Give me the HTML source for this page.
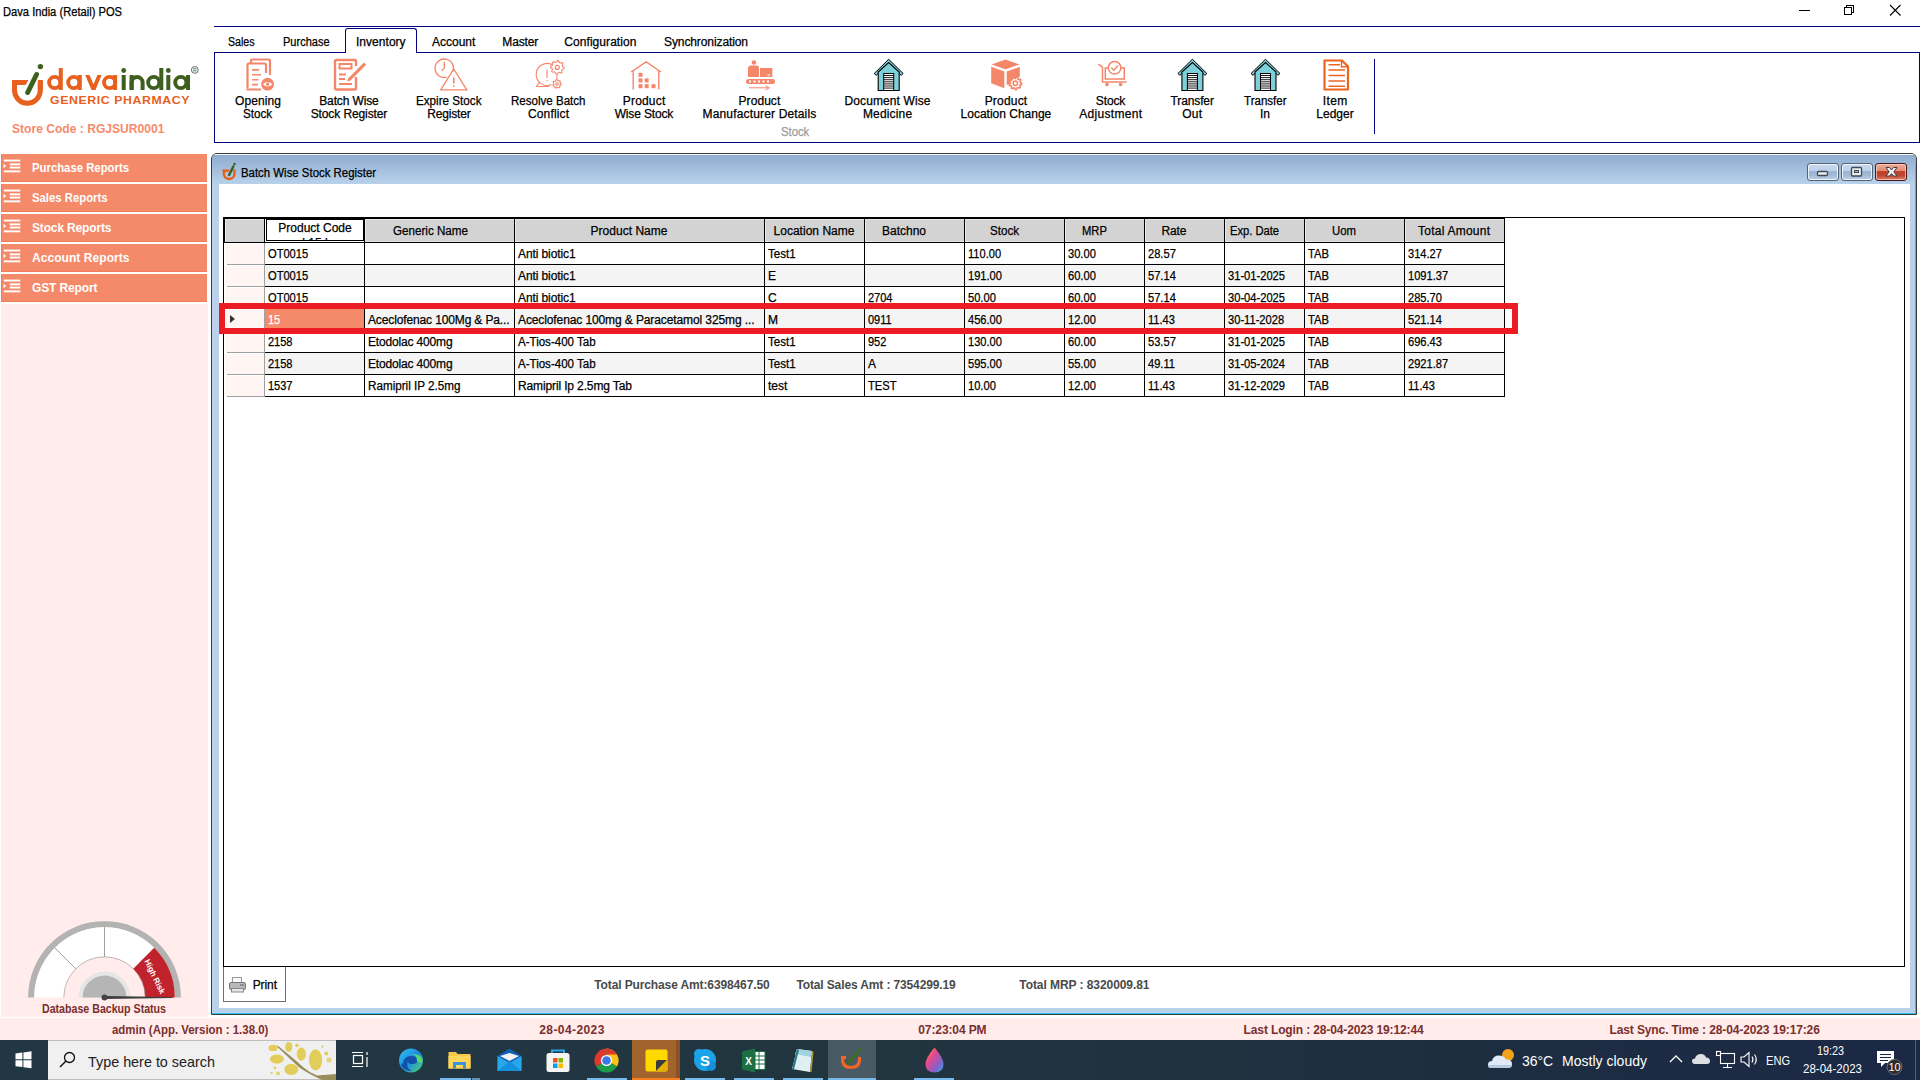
<!DOCTYPE html>
<html><head><meta charset="utf-8"><style>
html,body{margin:0;padding:0;}
body{width:1920px;height:1080px;position:relative;overflow:hidden;background:#fff;font-family:"Liberation Sans",sans-serif;}
div{box-sizing:border-box;}
.t{position:absolute;white-space:nowrap;line-height:20px;-webkit-text-stroke:0.25px currentColor;}
svg{position:absolute;overflow:visible;}
</style></head><body>
<div class="t" style="left:3.00px;top:2px;font-size:12px;font-weight:400;color:#000;letter-spacing:0.000px;transform:scaleX(0.9295);transform-origin:0 0;">Dava India (Retail) POS</div>
<svg style="left:0;top:0" width="1920" height="24"><g stroke="#000" stroke-width="1" fill="none" shape-rendering="crispEdges"><line x1="1799" y1="10.5" x2="1810" y2="10.5"/><rect x="1844.5" y="7.5" width="7" height="7"/><polyline points="1846.5,7.5 1846.5,5.5 1853.5,5.5 1853.5,12.5 1851.5,12.5"/></g><g stroke="#000" stroke-width="1.1" fill="none"><line x1="1890" y1="5" x2="1900.5" y2="15.5"/><line x1="1900.5" y1="5" x2="1890" y2="15.5"/></g></svg>
<div style="position:absolute;left:214px;top:26px;width:1706px;height:1px;background:#000080"></div>
<div class="t" style="left:228.00px;top:32px;font-size:12px;font-weight:400;color:#000;letter-spacing:0.000px;transform:scaleX(0.8862);transform-origin:0 0;">Sales</div>
<div class="t" style="left:282.50px;top:32px;font-size:12px;font-weight:400;color:#000;letter-spacing:0.000px;transform:scaleX(0.9174);transform-origin:0 0;">Purchase</div>
<div class="t" style="left:356.00px;top:32px;font-size:12px;font-weight:400;color:#000;letter-spacing:0.032px;">Inventory</div>
<div class="t" style="left:432.00px;top:32px;font-size:12px;font-weight:400;color:#000;letter-spacing:-0.007px;">Account</div>
<div class="t" style="left:502.30px;top:32px;font-size:12px;font-weight:400;color:#000;letter-spacing:-0.134px;">Master</div>
<div class="t" style="left:564.30px;top:32px;font-size:12px;font-weight:400;color:#000;letter-spacing:0.060px;">Configuration</div>
<div class="t" style="left:664.00px;top:32px;font-size:12px;font-weight:400;color:#000;letter-spacing:-0.098px;">Synchronization</div>
<div style="position:absolute;left:214px;top:52px;width:1706px;height:91px;border:1px solid #000080;background:transparent"></div>
<div style="position:absolute;left:345px;top:28px;width:72px;height:25px;border:1px solid #000080;border-bottom:none;border-radius:3px 3px 0 0;background:transparent"></div>
<div style="position:absolute;left:346px;top:52px;width:70px;height:1px;background:#fff"></div>
<div style="position:absolute;left:1374px;top:59px;width:1px;height:75px;background:#000080"></div>
<div class="t" style="left:235.00px;top:91px;font-size:12px;font-weight:400;color:#000;letter-spacing:0.107px;">Opening</div>
<div class="t" style="left:243.40px;top:104px;font-size:12px;font-weight:400;color:#000;letter-spacing:0.000px;transform:scaleX(0.9733);transform-origin:0 0;">Stock</div>
<div class="t" style="left:319.25px;top:91px;font-size:12px;font-weight:400;color:#000;letter-spacing:-0.130px;">Batch Wise</div>
<div class="t" style="left:310.65px;top:104px;font-size:12px;font-weight:400;color:#000;letter-spacing:-0.101px;">Stock Register</div>
<div class="t" style="left:416.25px;top:91px;font-size:12px;font-weight:400;color:#000;letter-spacing:0.000px;transform:scaleX(0.9726);transform-origin:0 0;">Expire Stock</div>
<div class="t" style="left:427.15px;top:104px;font-size:12px;font-weight:400;color:#000;letter-spacing:-0.141px;">Register</div>
<div class="t" style="left:511.25px;top:91px;font-size:12px;font-weight:400;color:#000;letter-spacing:0.000px;transform:scaleX(0.9630);transform-origin:0 0;">Resolve Batch</div>
<div class="t" style="left:527.90px;top:104px;font-size:12px;font-weight:400;color:#000;letter-spacing:0.169px;">Conflict</div>
<div class="t" style="left:622.75px;top:91px;font-size:12px;font-weight:400;color:#000;letter-spacing:0.193px;">Product</div>
<div class="t" style="left:614.65px;top:104px;font-size:12px;font-weight:400;color:#000;letter-spacing:-0.144px;">Wise Stock</div>
<div class="t" style="left:738.55px;top:91px;font-size:12px;font-weight:400;color:#000;letter-spacing:0.059px;">Product</div>
<div class="t" style="left:702.55px;top:104px;font-size:12px;font-weight:400;color:#000;letter-spacing:0.158px;">Manufacturer Details</div>
<div class="t" style="left:844.50px;top:91px;font-size:12px;font-weight:400;color:#000;letter-spacing:0.109px;">Document Wise</div>
<div class="t" style="left:862.90px;top:104px;font-size:12px;font-weight:400;color:#000;letter-spacing:0.167px;">Medicine</div>
<div class="t" style="left:984.65px;top:91px;font-size:12px;font-weight:400;color:#000;letter-spacing:0.193px;">Product</div>
<div class="t" style="left:960.55px;top:104px;font-size:12px;font-weight:400;color:#000;letter-spacing:-0.001px;">Location Change</div>
<div class="t" style="left:1095.85px;top:91px;font-size:12px;font-weight:400;color:#000;letter-spacing:-0.125px;">Stock</div>
<div class="t" style="left:1079.25px;top:104px;font-size:12px;font-weight:400;color:#000;letter-spacing:0.298px;">Adjustment</div>
<div class="t" style="left:1170.50px;top:91px;font-size:12px;font-weight:400;color:#000;letter-spacing:-0.119px;">Transfer</div>
<div class="t" style="left:1182.20px;top:104px;font-size:12px;font-weight:400;color:#000;letter-spacing:0.336px;">Out</div>
<div class="t" style="left:1243.70px;top:91px;font-size:12px;font-weight:400;color:#000;letter-spacing:0.000px;transform:scaleX(0.9631);transform-origin:0 0;">Transfer</div>
<div class="t" style="left:1260.10px;top:104px;font-size:12px;font-weight:400;color:#000;letter-spacing:-0.200px;">In</div>
<div class="t" style="left:1322.80px;top:91px;font-size:12px;font-weight:400;color:#000;letter-spacing:0.357px;">Item</div>
<div class="t" style="left:1316.30px;top:104px;font-size:12px;font-weight:400;color:#000;letter-spacing:0.008px;">Ledger</div>
<div class="t" style="left:781.30px;top:122px;font-size:12px;font-weight:400;color:#9a9a9a;letter-spacing:0.000px;transform:scaleX(0.9400);transform-origin:0 0;">Stock</div>
<div class="t" style="left:12.20px;top:119px;font-size:13px;font-weight:700;color:#f58a6a;letter-spacing:0.000px;-webkit-text-stroke:0;transform:scaleX(0.9292);transform-origin:0 0;">Store Code : RGJSUR0001</div>
<div style="position:absolute;left:1px;top:154px;width:206px;height:28px;background:#f58a6a;border-bottom:1px solid #f47c5a;border-left:1px solid #f47c5a"></div>
<svg style="left:0;top:154px" width="30" height="28"><g fill="#fff"><rect x="3.8" y="5.6" width="16.5" height="1.9"/><rect x="9.8" y="9.4" width="10.5" height="1.9"/><rect x="9.8" y="12.6" width="10.5" height="1.9"/><rect x="3.8" y="16.4" width="16.5" height="1.9"/></g><polygon points="3.5,9.8 6.2,12 3.5,14.2" fill="#fff"/></svg>
<div class="t" style="left:32.00px;top:158px;font-size:12px;font-weight:700;color:#fff;letter-spacing:0.000px;-webkit-text-stroke:0;transform:scaleX(0.9446);transform-origin:0 0;">Purchase Reports</div>
<div style="position:absolute;left:1px;top:184px;width:206px;height:28px;background:#f58a6a;border-bottom:1px solid #f47c5a;border-left:1px solid #f47c5a"></div>
<svg style="left:0;top:184px" width="30" height="28"><g fill="#fff"><rect x="3.8" y="5.6" width="16.5" height="1.9"/><rect x="9.8" y="9.4" width="10.5" height="1.9"/><rect x="9.8" y="12.6" width="10.5" height="1.9"/><rect x="3.8" y="16.4" width="16.5" height="1.9"/></g><polygon points="3.5,9.8 6.2,12 3.5,14.2" fill="#fff"/></svg>
<div class="t" style="left:32.00px;top:188px;font-size:12px;font-weight:700;color:#fff;letter-spacing:0.000px;-webkit-text-stroke:0;transform:scaleX(0.9436);transform-origin:0 0;">Sales Reports</div>
<div style="position:absolute;left:1px;top:214px;width:206px;height:28px;background:#f58a6a;border-bottom:1px solid #f47c5a;border-left:1px solid #f47c5a"></div>
<svg style="left:0;top:214px" width="30" height="28"><g fill="#fff"><rect x="3.8" y="5.6" width="16.5" height="1.9"/><rect x="9.8" y="9.4" width="10.5" height="1.9"/><rect x="9.8" y="12.6" width="10.5" height="1.9"/><rect x="3.8" y="16.4" width="16.5" height="1.9"/></g><polygon points="3.5,9.8 6.2,12 3.5,14.2" fill="#fff"/></svg>
<div class="t" style="left:32.00px;top:218px;font-size:12px;font-weight:700;color:#fff;letter-spacing:-0.154px;-webkit-text-stroke:0;">Stock Reports</div>
<div style="position:absolute;left:1px;top:244px;width:206px;height:28px;background:#f58a6a;border-bottom:1px solid #f47c5a;border-left:1px solid #f47c5a"></div>
<svg style="left:0;top:244px" width="30" height="28"><g fill="#fff"><rect x="3.8" y="5.6" width="16.5" height="1.9"/><rect x="9.8" y="9.4" width="10.5" height="1.9"/><rect x="9.8" y="12.6" width="10.5" height="1.9"/><rect x="3.8" y="16.4" width="16.5" height="1.9"/></g><polygon points="3.5,9.8 6.2,12 3.5,14.2" fill="#fff"/></svg>
<div class="t" style="left:32.00px;top:248px;font-size:12px;font-weight:700;color:#fff;letter-spacing:0.059px;-webkit-text-stroke:0;">Account Reports</div>
<div style="position:absolute;left:1px;top:274px;width:206px;height:28px;background:#f58a6a;border-bottom:1px solid #f47c5a;border-left:1px solid #f47c5a"></div>
<svg style="left:0;top:274px" width="30" height="28"><g fill="#fff"><rect x="3.8" y="5.6" width="16.5" height="1.9"/><rect x="9.8" y="9.4" width="10.5" height="1.9"/><rect x="9.8" y="12.6" width="10.5" height="1.9"/><rect x="3.8" y="16.4" width="16.5" height="1.9"/></g><polygon points="3.5,9.8 6.2,12 3.5,14.2" fill="#fff"/></svg>
<div class="t" style="left:32.00px;top:278px;font-size:12px;font-weight:700;color:#fff;letter-spacing:-0.128px;-webkit-text-stroke:0;">GST Report</div>
<div style="position:absolute;left:1px;top:304px;width:207px;height:713px;background:#ffeceb"></div>
<div style="position:absolute;left:0px;top:1018px;width:1920px;height:22px;background:#ffeceb"></div>
<div class="t" style="left:112.20px;top:1020px;font-size:12px;font-weight:700;color:#7a2f2f;letter-spacing:0.000px;-webkit-text-stroke:0;transform:scaleX(0.9531);transform-origin:0 0;">admin (App. Version : 1.38.0)</div>
<div class="t" style="left:539.30px;top:1020px;font-size:12px;font-weight:700;color:#7a2f2f;letter-spacing:0.403px;-webkit-text-stroke:0;">28-04-2023</div>
<div class="t" style="left:918.30px;top:1020px;font-size:12px;font-weight:700;color:#7a2f2f;letter-spacing:-0.106px;-webkit-text-stroke:0;">07:23:04 PM</div>
<div class="t" style="left:1243.60px;top:1020px;font-size:12px;font-weight:700;color:#7a2f2f;letter-spacing:-0.130px;-webkit-text-stroke:0;">Last Login : 28-04-2023 19:12:44</div>
<div class="t" style="left:1609.50px;top:1020px;font-size:12px;font-weight:700;color:#7a2f2f;letter-spacing:-0.117px;-webkit-text-stroke:0;">Last Sync. Time : 28-04-2023 19:17:26</div>
<div style="position:absolute;left:211px;top:153px;width:1706px;height:862px;border:1px solid #3a3a3a;border-radius:6px 6px 0 0;background:#b9d1ea"></div>
<div style="position:absolute;left:212px;top:154px;width:1704px;height:30px;border-radius:5px 5px 0 0;background:linear-gradient(#f4f8fc 0px,#f4f8fc 1px,#8fadd0 1px,#b9d1ea 100%)"></div>
<div style="position:absolute;left:219px;top:184px;width:1691px;height:824px;background:#fff"></div>
<div style="position:absolute;left:212px;top:1013px;width:1704px;height:1px;background:#29c3f0"></div>
<div style="position:absolute;left:1915px;top:163px;width:1px;height:851px;background:#29c3f0"></div>
<div class="t" style="left:241.00px;top:163px;font-size:12px;font-weight:400;color:#000;letter-spacing:0.000px;transform:scaleX(0.9506);transform-origin:0 0;">Batch Wise Stock Register</div>
<div style="position:absolute;left:223px;top:217px;width:1682px;height:750px;border:1px solid #000;background:#fff"></div>
<div style="position:absolute;left:223px;top:217px;width:1282px;height:2px;background:#000"></div>
<div style="position:absolute;left:223px;top:217px;width:2px;height:26px;background:#000"></div>
<div style="position:absolute;left:225px;top:219px;width:39px;height:23px;background:#d3d3d3;border-top:1px solid #e9e9e9;border-left:1px solid #e9e9e9"></div>
<div style="position:absolute;left:265px;top:219px;width:99px;height:23px;background:#d3d3d3;border-top:1px solid #e9e9e9;border-left:1px solid #e9e9e9;border-bottom:1px solid #e4e4e4"></div>
<div style="position:absolute;left:365px;top:219px;width:149px;height:23px;background:#d3d3d3;border-top:1px solid #e9e9e9;border-left:1px solid #e9e9e9;border-bottom:1px solid #e4e4e4"></div>
<div style="position:absolute;left:515px;top:219px;width:249px;height:23px;background:#d3d3d3;border-top:1px solid #e9e9e9;border-left:1px solid #e9e9e9;border-bottom:1px solid #e4e4e4"></div>
<div style="position:absolute;left:765px;top:219px;width:99px;height:23px;background:#d3d3d3;border-top:1px solid #e9e9e9;border-left:1px solid #e9e9e9;border-bottom:1px solid #e4e4e4"></div>
<div style="position:absolute;left:865px;top:219px;width:99px;height:23px;background:#d3d3d3;border-top:1px solid #e9e9e9;border-left:1px solid #e9e9e9;border-bottom:1px solid #e4e4e4"></div>
<div style="position:absolute;left:965px;top:219px;width:99px;height:23px;background:#d3d3d3;border-top:1px solid #e9e9e9;border-left:1px solid #e9e9e9;border-bottom:1px solid #e4e4e4"></div>
<div style="position:absolute;left:1065px;top:219px;width:79px;height:23px;background:#d3d3d3;border-top:1px solid #e9e9e9;border-left:1px solid #e9e9e9;border-bottom:1px solid #e4e4e4"></div>
<div style="position:absolute;left:1145px;top:219px;width:79px;height:23px;background:#d3d3d3;border-top:1px solid #e9e9e9;border-left:1px solid #e9e9e9;border-bottom:1px solid #e4e4e4"></div>
<div style="position:absolute;left:1225px;top:219px;width:79px;height:23px;background:#d3d3d3;border-top:1px solid #e9e9e9;border-left:1px solid #e9e9e9;border-bottom:1px solid #e4e4e4"></div>
<div style="position:absolute;left:1305px;top:219px;width:99px;height:23px;background:#d3d3d3;border-top:1px solid #e9e9e9;border-left:1px solid #e9e9e9;border-bottom:1px solid #e4e4e4"></div>
<div style="position:absolute;left:1405px;top:219px;width:99px;height:23px;background:#d3d3d3;border-top:1px solid #e9e9e9;border-left:1px solid #e9e9e9;border-bottom:1px solid #e4e4e4"></div>
<div style="position:absolute;left:225px;top:242px;width:1280px;height:1px;background:#000"></div>
<div style="position:absolute;left:265px;top:219px;width:99px;height:23px;background:#fff"></div>
<div style="position:absolute;left:267px;top:220px;width:96px;height:20px;overflow:hidden"><div class="t" style="left:0;width:96px;text-align:center;top:0.5px;font-size:12px;line-height:15px;color:#000">Product Code<br>l&nbsp;15&nbsp;l</div></div>
<div style="position:absolute;left:266px;top:219px;width:98px;height:22px;border:1px solid #000"></div>
<div class="t" style="left:392.50px;top:221px;font-size:12px;font-weight:400;color:#000;letter-spacing:0.000px;transform:scaleX(0.9695);transform-origin:0 0;">Generic Name</div>
<div class="t" style="left:590.50px;top:221px;font-size:12px;font-weight:400;color:#000;letter-spacing:0.028px;">Product Name</div>
<div class="t" style="left:773.50px;top:221px;font-size:12px;font-weight:400;color:#000;letter-spacing:0.025px;">Location Name</div>
<div class="t" style="left:882.00px;top:221px;font-size:12px;font-weight:400;color:#000;letter-spacing:-0.003px;">Batchno</div>
<div class="t" style="left:989.50px;top:221px;font-size:12px;font-weight:400;color:#000;letter-spacing:0.000px;transform:scaleX(0.9667);transform-origin:0 0;">Stock</div>
<div class="t" style="left:1081.50px;top:221px;font-size:12px;font-weight:400;color:#000;letter-spacing:0.000px;transform:scaleX(0.9373);transform-origin:0 0;">MRP</div>
<div class="t" style="left:1161.50px;top:221px;font-size:12px;font-weight:400;color:#000;letter-spacing:-0.115px;">Rate</div>
<div class="t" style="left:1229.50px;top:221px;font-size:12px;font-weight:400;color:#000;letter-spacing:0.000px;transform:scaleX(0.9303);transform-origin:0 0;">Exp. Date</div>
<div class="t" style="left:1332.00px;top:221px;font-size:12px;font-weight:400;color:#000;letter-spacing:0.000px;transform:scaleX(0.9470);transform-origin:0 0;">Uom</div>
<div class="t" style="left:1418.00px;top:221px;font-size:12px;font-weight:400;color:#000;letter-spacing:0.240px;">Total Amount</div>
<div style="position:absolute;left:224px;top:243px;width:40px;height:21px;background:#fff5f2;border-left:1px solid #fff;border-top:1px solid #fff"></div>
<div style="position:absolute;left:227px;top:264px;width:37px;height:1px;background:#a0a0a0"></div>
<div style="position:absolute;left:265px;top:243px;width:1240px;height:21px;background:#fff"></div>
<div style="position:absolute;left:265px;top:264px;width:1240px;height:1px;background:#000"></div>
<div class="t" style="left:268.00px;top:244px;font-size:12px;font-weight:400;color:#000;letter-spacing:0.000px;transform:scaleX(0.9262);transform-origin:0 0;">OT0015</div>
<div class="t" style="left:518.00px;top:244px;font-size:12px;font-weight:400;color:#000;letter-spacing:-0.095px;">Anti biotic1</div>
<div class="t" style="left:768.00px;top:244px;font-size:12px;font-weight:400;color:#000;letter-spacing:0.000px;transform:scaleX(0.9634);transform-origin:0 0;">Test1</div>
<div class="t" style="left:968.00px;top:244px;font-size:12px;font-weight:400;color:#000;letter-spacing:0.000px;transform:scaleX(0.9232);transform-origin:0 0;">110.00</div>
<div class="t" style="left:1068.00px;top:244px;font-size:12px;font-weight:400;color:#000;letter-spacing:0.000px;transform:scaleX(0.9267);transform-origin:0 0;">30.00</div>
<div class="t" style="left:1148.00px;top:244px;font-size:12px;font-weight:400;color:#000;letter-spacing:0.000px;transform:scaleX(0.9267);transform-origin:0 0;">28.57</div>
<div class="t" style="left:1308.00px;top:244px;font-size:12px;font-weight:400;color:#000;letter-spacing:0.000px;transform:scaleX(0.9331);transform-origin:0 0;">TAB</div>
<div class="t" style="left:1408.00px;top:244px;font-size:12px;font-weight:400;color:#000;letter-spacing:0.000px;transform:scaleX(0.9250);transform-origin:0 0;">314.27</div>
<div style="position:absolute;left:224px;top:265px;width:40px;height:21px;background:#fff5f2;border-left:1px solid #fff;border-top:1px solid #fff"></div>
<div style="position:absolute;left:227px;top:286px;width:37px;height:1px;background:#a0a0a0"></div>
<div style="position:absolute;left:265px;top:265px;width:1240px;height:21px;background:#f4f4f4"></div>
<div style="position:absolute;left:265px;top:286px;width:1240px;height:1px;background:#000"></div>
<div class="t" style="left:268.00px;top:266px;font-size:12px;font-weight:400;color:#000;letter-spacing:0.000px;transform:scaleX(0.9262);transform-origin:0 0;">OT0015</div>
<div class="t" style="left:518.00px;top:266px;font-size:12px;font-weight:400;color:#000;letter-spacing:-0.095px;">Anti biotic1</div>
<div class="t" style="left:768.00px;top:266px;font-size:12px;font-weight:400;color:#000;letter-spacing:0.000px;">E</div>
<div class="t" style="left:968.00px;top:266px;font-size:12px;font-weight:400;color:#000;letter-spacing:0.000px;transform:scaleX(0.9250);transform-origin:0 0;">191.00</div>
<div class="t" style="left:1068.00px;top:266px;font-size:12px;font-weight:400;color:#000;letter-spacing:0.000px;transform:scaleX(0.9267);transform-origin:0 0;">60.00</div>
<div class="t" style="left:1148.00px;top:266px;font-size:12px;font-weight:400;color:#000;letter-spacing:0.000px;transform:scaleX(0.9267);transform-origin:0 0;">57.14</div>
<div class="t" style="left:1228.00px;top:266px;font-size:12px;font-weight:400;color:#000;letter-spacing:0.000px;transform:scaleX(0.9283);transform-origin:0 0;">31-01-2025</div>
<div class="t" style="left:1308.00px;top:266px;font-size:12px;font-weight:400;color:#000;letter-spacing:0.000px;transform:scaleX(0.9331);transform-origin:0 0;">TAB</div>
<div class="t" style="left:1408.00px;top:266px;font-size:12px;font-weight:400;color:#000;letter-spacing:0.000px;transform:scaleX(0.9239);transform-origin:0 0;">1091.37</div>
<div style="position:absolute;left:224px;top:287px;width:40px;height:21px;background:#fff5f2;border-left:1px solid #fff;border-top:1px solid #fff"></div>
<div style="position:absolute;left:227px;top:308px;width:37px;height:1px;background:#a0a0a0"></div>
<div style="position:absolute;left:265px;top:287px;width:1240px;height:21px;background:#fff"></div>
<div style="position:absolute;left:265px;top:308px;width:1240px;height:1px;background:#000"></div>
<div class="t" style="left:268.00px;top:288px;font-size:12px;font-weight:400;color:#000;letter-spacing:0.000px;transform:scaleX(0.9262);transform-origin:0 0;">OT0015</div>
<div class="t" style="left:518.00px;top:288px;font-size:12px;font-weight:400;color:#000;letter-spacing:-0.095px;">Anti biotic1</div>
<div class="t" style="left:768.00px;top:288px;font-size:12px;font-weight:400;color:#000;letter-spacing:0.000px;">C</div>
<div class="t" style="left:868.00px;top:288px;font-size:12px;font-weight:400;color:#000;letter-spacing:0.000px;transform:scaleX(0.9176);transform-origin:0 0;">2704</div>
<div class="t" style="left:968.00px;top:288px;font-size:12px;font-weight:400;color:#000;letter-spacing:0.000px;transform:scaleX(0.9267);transform-origin:0 0;">50.00</div>
<div class="t" style="left:1068.00px;top:288px;font-size:12px;font-weight:400;color:#000;letter-spacing:0.000px;transform:scaleX(0.9267);transform-origin:0 0;">60.00</div>
<div class="t" style="left:1148.00px;top:288px;font-size:12px;font-weight:400;color:#000;letter-spacing:0.000px;transform:scaleX(0.9267);transform-origin:0 0;">57.14</div>
<div class="t" style="left:1228.00px;top:288px;font-size:12px;font-weight:400;color:#000;letter-spacing:0.000px;transform:scaleX(0.9283);transform-origin:0 0;">30-04-2025</div>
<div class="t" style="left:1308.00px;top:288px;font-size:12px;font-weight:400;color:#000;letter-spacing:0.000px;transform:scaleX(0.9331);transform-origin:0 0;">TAB</div>
<div class="t" style="left:1408.00px;top:288px;font-size:12px;font-weight:400;color:#000;letter-spacing:0.000px;transform:scaleX(0.9250);transform-origin:0 0;">285.70</div>
<div style="position:absolute;left:224px;top:309px;width:40px;height:21px;background:#fff5f2;border-left:1px solid #fff;border-top:1px solid #fff"></div>
<div style="position:absolute;left:227px;top:330px;width:37px;height:1px;background:#a0a0a0"></div>
<div style="position:absolute;left:265px;top:309px;width:1240px;height:21px;background:#f4f4f4"></div>
<div style="position:absolute;left:265px;top:330px;width:1240px;height:1px;background:#000"></div>
<div style="position:absolute;left:265px;top:309px;width:99px;height:21px;background:#f58a6a"></div>
<div class="t" style="left:268.00px;top:310px;font-size:12px;font-weight:400;color:#fff;letter-spacing:0.000px;transform:scaleX(0.9176);transform-origin:0 0;">15</div>
<div class="t" style="left:368.00px;top:310px;font-size:12px;font-weight:400;color:#000;letter-spacing:-0.131px;">Aceclofenac 100Mg &amp; Pa...</div>
<div class="t" style="left:518.00px;top:310px;font-size:12px;font-weight:400;color:#000;letter-spacing:-0.108px;">Aceclofenac 100mg &amp; Paracetamol 325mg ...</div>
<div class="t" style="left:768.00px;top:310px;font-size:12px;font-weight:400;color:#000;letter-spacing:0.000px;">M</div>
<div class="t" style="left:868.00px;top:310px;font-size:12px;font-weight:400;color:#000;letter-spacing:0.000px;transform:scaleX(0.9147);transform-origin:0 0;">0911</div>
<div class="t" style="left:968.00px;top:310px;font-size:12px;font-weight:400;color:#000;letter-spacing:0.000px;transform:scaleX(0.9250);transform-origin:0 0;">456.00</div>
<div class="t" style="left:1068.00px;top:310px;font-size:12px;font-weight:400;color:#000;letter-spacing:0.000px;transform:scaleX(0.9267);transform-origin:0 0;">12.00</div>
<div class="t" style="left:1148.00px;top:310px;font-size:12px;font-weight:400;color:#000;letter-spacing:0.000px;transform:scaleX(0.9245);transform-origin:0 0;">11.43</div>
<div class="t" style="left:1228.00px;top:310px;font-size:12px;font-weight:400;color:#000;letter-spacing:0.000px;transform:scaleX(0.9273);transform-origin:0 0;">30-11-2028</div>
<div class="t" style="left:1308.00px;top:310px;font-size:12px;font-weight:400;color:#000;letter-spacing:0.000px;transform:scaleX(0.9331);transform-origin:0 0;">TAB</div>
<div class="t" style="left:1408.00px;top:310px;font-size:12px;font-weight:400;color:#000;letter-spacing:0.000px;transform:scaleX(0.9250);transform-origin:0 0;">521.14</div>
<div style="position:absolute;left:224px;top:331px;width:40px;height:21px;background:#fff5f2;border-left:1px solid #fff;border-top:1px solid #fff"></div>
<div style="position:absolute;left:227px;top:352px;width:37px;height:1px;background:#a0a0a0"></div>
<div style="position:absolute;left:265px;top:331px;width:1240px;height:21px;background:#fff"></div>
<div style="position:absolute;left:265px;top:352px;width:1240px;height:1px;background:#000"></div>
<div class="t" style="left:268.00px;top:332px;font-size:12px;font-weight:400;color:#000;letter-spacing:0.000px;transform:scaleX(0.9176);transform-origin:0 0;">2158</div>
<div class="t" style="left:368.00px;top:332px;font-size:12px;font-weight:400;color:#000;letter-spacing:-0.165px;">Etodolac 400mg</div>
<div class="t" style="left:518.00px;top:332px;font-size:12px;font-weight:400;color:#000;letter-spacing:0.000px;transform:scaleX(0.9610);transform-origin:0 0;">A-Tios-400 Tab</div>
<div class="t" style="left:768.00px;top:332px;font-size:12px;font-weight:400;color:#000;letter-spacing:0.000px;transform:scaleX(0.9634);transform-origin:0 0;">Test1</div>
<div class="t" style="left:868.00px;top:332px;font-size:12px;font-weight:400;color:#000;letter-spacing:0.000px;transform:scaleX(0.9176);transform-origin:0 0;">952</div>
<div class="t" style="left:968.00px;top:332px;font-size:12px;font-weight:400;color:#000;letter-spacing:0.000px;transform:scaleX(0.9250);transform-origin:0 0;">130.00</div>
<div class="t" style="left:1068.00px;top:332px;font-size:12px;font-weight:400;color:#000;letter-spacing:0.000px;transform:scaleX(0.9267);transform-origin:0 0;">60.00</div>
<div class="t" style="left:1148.00px;top:332px;font-size:12px;font-weight:400;color:#000;letter-spacing:0.000px;transform:scaleX(0.9267);transform-origin:0 0;">53.57</div>
<div class="t" style="left:1228.00px;top:332px;font-size:12px;font-weight:400;color:#000;letter-spacing:0.000px;transform:scaleX(0.9283);transform-origin:0 0;">31-01-2025</div>
<div class="t" style="left:1308.00px;top:332px;font-size:12px;font-weight:400;color:#000;letter-spacing:0.000px;transform:scaleX(0.9331);transform-origin:0 0;">TAB</div>
<div class="t" style="left:1408.00px;top:332px;font-size:12px;font-weight:400;color:#000;letter-spacing:0.000px;transform:scaleX(0.9250);transform-origin:0 0;">696.43</div>
<div style="position:absolute;left:224px;top:353px;width:40px;height:21px;background:#fff5f2;border-left:1px solid #fff;border-top:1px solid #fff"></div>
<div style="position:absolute;left:227px;top:374px;width:37px;height:1px;background:#a0a0a0"></div>
<div style="position:absolute;left:265px;top:353px;width:1240px;height:21px;background:#f4f4f4"></div>
<div style="position:absolute;left:265px;top:374px;width:1240px;height:1px;background:#000"></div>
<div class="t" style="left:268.00px;top:354px;font-size:12px;font-weight:400;color:#000;letter-spacing:0.000px;transform:scaleX(0.9176);transform-origin:0 0;">2158</div>
<div class="t" style="left:368.00px;top:354px;font-size:12px;font-weight:400;color:#000;letter-spacing:-0.165px;">Etodolac 400mg</div>
<div class="t" style="left:518.00px;top:354px;font-size:12px;font-weight:400;color:#000;letter-spacing:0.000px;transform:scaleX(0.9610);transform-origin:0 0;">A-Tios-400 Tab</div>
<div class="t" style="left:768.00px;top:354px;font-size:12px;font-weight:400;color:#000;letter-spacing:0.000px;transform:scaleX(0.9634);transform-origin:0 0;">Test1</div>
<div class="t" style="left:868.00px;top:354px;font-size:12px;font-weight:400;color:#000;letter-spacing:0.000px;">A</div>
<div class="t" style="left:968.00px;top:354px;font-size:12px;font-weight:400;color:#000;letter-spacing:0.000px;transform:scaleX(0.9250);transform-origin:0 0;">595.00</div>
<div class="t" style="left:1068.00px;top:354px;font-size:12px;font-weight:400;color:#000;letter-spacing:0.000px;transform:scaleX(0.9267);transform-origin:0 0;">55.00</div>
<div class="t" style="left:1148.00px;top:354px;font-size:12px;font-weight:400;color:#000;letter-spacing:0.000px;transform:scaleX(0.9245);transform-origin:0 0;">49.11</div>
<div class="t" style="left:1228.00px;top:354px;font-size:12px;font-weight:400;color:#000;letter-spacing:0.000px;transform:scaleX(0.9283);transform-origin:0 0;">31-05-2024</div>
<div class="t" style="left:1308.00px;top:354px;font-size:12px;font-weight:400;color:#000;letter-spacing:0.000px;transform:scaleX(0.9331);transform-origin:0 0;">TAB</div>
<div class="t" style="left:1408.00px;top:354px;font-size:12px;font-weight:400;color:#000;letter-spacing:0.000px;transform:scaleX(0.9239);transform-origin:0 0;">2921.87</div>
<div style="position:absolute;left:224px;top:375px;width:40px;height:21px;background:#fff5f2;border-left:1px solid #fff;border-top:1px solid #fff"></div>
<div style="position:absolute;left:227px;top:396px;width:37px;height:1px;background:#a0a0a0"></div>
<div style="position:absolute;left:265px;top:375px;width:1240px;height:21px;background:#fff"></div>
<div style="position:absolute;left:265px;top:396px;width:1240px;height:1px;background:#000"></div>
<div class="t" style="left:268.00px;top:376px;font-size:12px;font-weight:400;color:#000;letter-spacing:0.000px;transform:scaleX(0.9176);transform-origin:0 0;">1537</div>
<div class="t" style="left:368.00px;top:376px;font-size:12px;font-weight:400;color:#000;letter-spacing:0.000px;transform:scaleX(0.9727);transform-origin:0 0;">Ramipril IP 2.5mg</div>
<div class="t" style="left:518.00px;top:376px;font-size:12px;font-weight:400;color:#000;letter-spacing:-0.130px;">Ramipril Ip 2.5mg Tab</div>
<div class="t" style="left:768.00px;top:376px;font-size:12px;font-weight:400;color:#000;letter-spacing:0.000px;">test</div>
<div class="t" style="left:868.00px;top:376px;font-size:12px;font-weight:400;color:#000;letter-spacing:0.000px;transform:scaleX(0.9348);transform-origin:0 0;">TEST</div>
<div class="t" style="left:968.00px;top:376px;font-size:12px;font-weight:400;color:#000;letter-spacing:0.000px;transform:scaleX(0.9267);transform-origin:0 0;">10.00</div>
<div class="t" style="left:1068.00px;top:376px;font-size:12px;font-weight:400;color:#000;letter-spacing:0.000px;transform:scaleX(0.9267);transform-origin:0 0;">12.00</div>
<div class="t" style="left:1148.00px;top:376px;font-size:12px;font-weight:400;color:#000;letter-spacing:0.000px;transform:scaleX(0.9245);transform-origin:0 0;">11.43</div>
<div class="t" style="left:1228.00px;top:376px;font-size:12px;font-weight:400;color:#000;letter-spacing:0.000px;transform:scaleX(0.9283);transform-origin:0 0;">31-12-2029</div>
<div class="t" style="left:1308.00px;top:376px;font-size:12px;font-weight:400;color:#000;letter-spacing:0.000px;transform:scaleX(0.9331);transform-origin:0 0;">TAB</div>
<div class="t" style="left:1408.00px;top:376px;font-size:12px;font-weight:400;color:#000;letter-spacing:0.000px;transform:scaleX(0.9245);transform-origin:0 0;">11.43</div>
<div style="position:absolute;left:264px;top:242px;width:1px;height:155px;background:#a0a0a0"></div>
<div style="position:absolute;left:364px;top:218px;width:1px;height:179px;background:#000"></div>
<div style="position:absolute;left:514px;top:218px;width:1px;height:179px;background:#000"></div>
<div style="position:absolute;left:764px;top:218px;width:1px;height:179px;background:#000"></div>
<div style="position:absolute;left:864px;top:218px;width:1px;height:179px;background:#000"></div>
<div style="position:absolute;left:964px;top:218px;width:1px;height:179px;background:#000"></div>
<div style="position:absolute;left:1064px;top:218px;width:1px;height:179px;background:#000"></div>
<div style="position:absolute;left:1144px;top:218px;width:1px;height:179px;background:#000"></div>
<div style="position:absolute;left:1224px;top:218px;width:1px;height:179px;background:#000"></div>
<div style="position:absolute;left:1304px;top:218px;width:1px;height:179px;background:#000"></div>
<div style="position:absolute;left:1404px;top:218px;width:1px;height:179px;background:#000"></div>
<div style="position:absolute;left:1504px;top:218px;width:1px;height:179px;background:#000"></div>
<div style="position:absolute;left:264px;top:218px;width:1px;height:25px;background:#000"></div>
<svg style="left:229px;top:314px" width="8" height="10"><polygon points="1,1 6,5 1,9" fill="#333"/></svg>
<div style="position:absolute;left:219px;top:303px;width:1299px;height:31px;border:6px solid #ec1c24"></div>
<div style="position:absolute;left:1807px;top:163px;width:32px;height:18px;background:linear-gradient(#c9daee 0%,#bcd0e8 45%,#9cb4d2 47%,#a3bad6 70%,#bcd2ea 100%);border:1px solid #53637a;border-radius:3px;box-shadow:inset 0 0 0 1px rgba(255,255,255,.75)"></div>
<div style="position:absolute;left:1841px;top:163px;width:32px;height:18px;background:linear-gradient(#c9daee 0%,#bcd0e8 45%,#9cb4d2 47%,#a3bad6 70%,#bcd2ea 100%);border:1px solid #53637a;border-radius:3px;box-shadow:inset 0 0 0 1px rgba(255,255,255,.75)"></div>
<div style="position:absolute;left:1875px;top:163px;width:32px;height:18px;background:linear-gradient(#eeaa98 0%,#e38a72 45%,#c1402a 47%,#bf442c 70%,#d98068 100%);border:1px solid #4a1515;border-radius:3px;box-shadow:inset 0 0 0 1px rgba(255,220,210,.7)"></div>
<svg style="left:1807px;top:163px" width="101" height="18"><rect x="10.5" y="8.5" width="10" height="4" rx="1" fill="#eeeeea" stroke="#3f4a5c" stroke-width="1.3"/><rect x="44.5" y="4.5" width="10" height="8.5" rx="1" fill="#eeeeea" stroke="#3f4a5c" stroke-width="1.3"/><rect x="47.5" y="7.5" width="4" height="2" fill="#9fb8d6" stroke="#3f4a5c" stroke-width="1"/><path d="M79 4.5 L82.5 4.5 L84.5 7 L86.5 4.5 L90 4.5 L86.8 8.8 L90 13 L86.5 13 L84.5 10.6 L82.5 13 L79 13 L82.2 8.8 Z" fill="#f4f4f4" stroke="#3a3f4a" stroke-width="1"/></svg>
<div style="position:absolute;left:223px;top:967px;width:63px;height:35px;border:1px solid #6f6f6f;border-top:none;background:#fff"></div>
<svg style="left:229px;top:977px" width="17" height="16"><rect x="3.5" y="0.5" width="9" height="6" fill="#fafafa" stroke="#999" stroke-width="1"/><rect x="0.5" y="5.5" width="16" height="7" rx="1.5" fill="#b9b9b9" stroke="#777" stroke-width="1"/><rect x="2.5" y="11.5" width="12" height="3.5" fill="#e6e6e6" stroke="#888" stroke-width="1"/><circle cx="12" cy="8" r="0.8" fill="#555"/><circle cx="14" cy="8" r="0.8" fill="#555"/></svg>
<div class="t" style="left:252.70px;top:975px;font-size:12px;font-weight:400;color:#000;letter-spacing:-0.093px;">Print</div>
<div class="t" style="left:594.30px;top:975px;font-size:12px;font-weight:700;color:#4a4a4a;letter-spacing:-0.122px;-webkit-text-stroke:0;">Total Purchase Amt:6398467.50</div>
<div class="t" style="left:796.40px;top:975px;font-size:12px;font-weight:700;color:#4a4a4a;letter-spacing:-0.126px;-webkit-text-stroke:0;">Total Sales Amt : 7354299.19</div>
<div class="t" style="left:1019.30px;top:975px;font-size:12px;font-weight:700;color:#4a4a4a;letter-spacing:-0.066px;-webkit-text-stroke:0;">Total MRP : 8320009.81</div>
<div style="position:absolute;left:0px;top:1040px;width:1920px;height:40px;background:linear-gradient(90deg,#213844 0%,#21353f 45%,#1e2e40 75%,#1b2846 100%)"></div>
<svg style="left:15px;top:1051px" width="18" height="18"><g fill="#fff"><polygon points="0.5,2.4 7.4,1.5 7.4,8.3 0.5,8.3"/><polygon points="8.4,1.4 16.5,0.3 16.5,8.3 8.4,8.3"/><polygon points="0.5,9.3 7.4,9.3 7.4,16.1 0.5,15.2"/><polygon points="8.4,9.3 16.5,9.3 16.5,17.3 8.4,16.2"/></g></svg>
<div style="position:absolute;left:48px;top:1040px;width:288px;height:40px;background:#f0f0f0;border-top:1px solid #bdbdbd;border-bottom:1px solid #bdbdbd"></div>
<svg style="left:58px;top:1050px" width="20" height="20"><circle cx="11.5" cy="7.5" r="5" fill="none" stroke="#111" stroke-width="1.3"/><line x1="8" y1="11" x2="2" y2="17" stroke="#111" stroke-width="1.4"/></svg>
<div class="t" style="left:88.00px;top:1052px;font-size:15px;font-weight:400;color:#222;letter-spacing:0.000px;transform:scaleX(0.9577);transform-origin:0 0;-webkit-text-stroke:0;">Type here to search</div>
<svg style="left:0;top:0" width="340" height="1080"><path d="M277.5 1045.5 Q292 1057 303 1067 Q310 1073 317 1075.5 L336 1074 L336 1080 L322 1080 Q309 1074 300 1068 Q290 1059 277 1046.5 Z" fill="#9b8d59"/><g fill="#e2cd5a"><ellipse cx="273.1" cy="1047.9" rx="4.6" ry="3.2"/><ellipse cx="288.8" cy="1046.9" rx="3.6" ry="5"/><ellipse cx="276.9" cy="1059.1" rx="7" ry="4.6"/><ellipse cx="301.3" cy="1054.1" rx="4.6" ry="6.6"/><ellipse cx="291.3" cy="1069.4" rx="7" ry="5.6"/><ellipse cx="315.6" cy="1059.8" rx="6.6" ry="10.5"/><circle cx="296.9" cy="1045.4" r="1.8"/><circle cx="322.5" cy="1046.6" r="1.1"/><circle cx="326.3" cy="1053.5" r="2"/><circle cx="329" cy="1060" r="2.6" opacity=".8"/><circle cx="275" cy="1067.9" r="1.3"/><circle cx="271.6" cy="1072.9" r="1.1"/><circle cx="278" cy="1073.5" r="2.1" opacity=".8"/></g></svg>
<svg style="left:351px;top:1051px" width="18" height="17"><g fill="none" stroke="#fff" stroke-width="1.2"><path d="M1 1.5 H12 M1 15.5 H12"/><rect x="2.5" y="4.5" width="9" height="8"/><path d="M16 1 V4 M16 6 V16"/></g></svg>
<svg style="left:398px;top:1048px" width="26" height="25" viewBox="0 0 26 25"><defs><linearGradient id="eg" x1="0" y1="0" x2="1" y2="1"><stop offset="0" stop-color="#36c3f0"/><stop offset=".5" stop-color="#1a8de0"/><stop offset="1" stop-color="#53d66b"/></linearGradient></defs><circle cx="13" cy="12.5" r="12" fill="url(#eg)"/><path d="M5 15 Q6 8 13 8 Q19 8 19 13 Q19 16 14 16 Q10 16 10 13 Q7 20 14 23 Q6 23 3 17 Z" fill="#1350a8"/><path d="M19 13 Q20 7 13 6 Q22 5 24.5 12 Q24 17 19 13 Z" fill="#5ed86a"/></svg>
<svg style="left:448px;top:1051px" width="23" height="18"><path d="M0.5 1 H8 L9.5 3 H22.5 V17.5 H0.5 Z" fill="#f5c84a"/><rect x="0.5" y="5" width="22" height="12.5" fill="#ffd65c"/><path d="M5 17.5 V11 H18 V17.5 H15 V14 H8 V17.5 Z" fill="#3c92dc"/></svg>
<div style="position:absolute;left:440px;top:1078px;width:31px;height:2px;background:#76b9ed"></div>
<div style="position:absolute;left:472px;top:1078px;width:8px;height:2px;background:#5d8fb8"></div>
<svg style="left:497px;top:1048px" width="25" height="24"><path d="M0.5 8 L12.5 0.5 L24.5 8 V23 H0.5 Z" fill="#0f5fb8"/><path d="M0.5 8 L12.5 15 L24.5 8 V23 H0.5 Z" fill="#28a8ea"/><path d="M3 8 L12.5 13 L22 8 L12.5 5 Z" fill="#f2f2f2"/><path d="M0.5 23 L12.5 13 L24.5 23 Z" fill="#1590dc"/></svg>
<svg style="left:546px;top:1049px" width="24" height="24"><path d="M6 4 V1.5 H18 V4" fill="none" stroke="#28a8ea" stroke-width="2"/><rect x="0.5" y="4" width="23" height="19" rx="2.5" fill="#f4f4f4"/><rect x="7" y="9" width="4.5" height="4.5" fill="#f25022"/><rect x="12.5" y="9" width="4.5" height="4.5" fill="#7fba00"/><rect x="7" y="14.5" width="4.5" height="4.5" fill="#00a4ef"/><rect x="12.5" y="14.5" width="4.5" height="4.5" fill="#ffb900"/></svg>
<svg style="left:594px;top:1048px" width="25" height="25" viewBox="-12.5 -12.5 25 25"><path d="M0 -12 A12 12 0 0 1 10.4 6 L0 0 Z" fill="#fbc116"/><path d="M10.4 6 A12 12 0 0 1 -10.4 6 L0 0 Z" fill="#1e9e4a"/><path d="M-10.4 6 A12 12 0 0 1 0 -12 L0 0 Z" fill="#dc3a2f"/><path d="M0 -12 A12 12 0 0 1 10.4 -6 L0 -6 Z" fill="#dc3a2f"/><circle r="5.6" fill="#fff"/><circle r="4.3" fill="#3b78e7"/></svg>
<div style="position:absolute;left:587px;top:1078px;width:40px;height:2px;background:#76b9ed"></div>
<div style="position:absolute;left:632px;top:1040px;width:48px;height:40px;background:#a2642f"></div>
<div style="position:absolute;left:676px;top:1040px;width:4px;height:40px;background:#8c5226"></div>
<div style="position:absolute;left:632px;top:1078px;width:48px;height:2px;background:#f77e1a"></div>
<svg style="left:645px;top:1049px" width="23" height="23"><rect x="0.5" y="0.5" width="22" height="22" rx="2" fill="#ffd800"/><path d="M11 22.5 L22.5 11 V20.5 Q22.5 22.5 20.5 22.5 Z" fill="#e6b000"/><path d="M11 22 L11 13 Q11 11 13 11 L22 11 Z" fill="#3a3a3a"/></svg>
<svg style="left:693px;top:1048px" width="24" height="24"><circle cx="12" cy="12" r="11" fill="#1aa3e8"/><circle cx="6" cy="6" r="5" fill="#1aa3e8"/><circle cx="18" cy="18" r="5" fill="#1590d8"/><text x="12" y="17.5" font-family="Liberation Sans" font-weight="700" font-size="15" text-anchor="middle" fill="#fff">S</text></svg>
<div style="position:absolute;left:685px;top:1078px;width:40px;height:2px;background:#76b9ed"></div>
<svg style="left:742px;top:1048px" width="24" height="25"><rect x="9" y="3.5" width="14" height="18" fill="#fff" stroke="#1d6f42" stroke-width="1"/><g stroke="#1d6f42" stroke-width="1"><path d="M13 4 V21 M17 4 V21 M9 8 H23 M9 12 H23 M9 16 H23"/></g><path d="M0 3.5 L13 0.5 V24.5 L0 21.5 Z" fill="#1d6f42"/><text x="6.5" y="16.5" font-family="Liberation Sans" font-weight="700" font-size="10" text-anchor="middle" fill="#fff">X</text></svg>
<div style="position:absolute;left:734px;top:1078px;width:40px;height:2px;background:#76b9ed"></div>
<svg style="left:790px;top:1048px" width="24" height="25"><path d="M7 1 L22 3 L20 24 L2 21 Z" fill="#dfeff2"/><path d="M7 1 L22 3 L21 9 L5 6 Z" fill="#9fd3de"/><path d="M2 21 L7 1 L9 2 L4 21.5 Z" fill="#2b7a8c"/><path d="M20 24 L22 3 L23.5 4 L21.5 24 Z" fill="#b89a3a"/></svg>
<div style="position:absolute;left:783px;top:1078px;width:40px;height:2px;background:#76b9ed"></div>
<div style="position:absolute;left:828px;top:1040px;width:48px;height:40px;background:#4a5a64"></div>
<div style="position:absolute;left:828px;top:1078px;width:48px;height:2px;background:#76b9ed"></div>
<svg style="left:839px;top:1047px" width="25" height="25"><path d="M2 9 H7 V12 H5 Q5 19 12 19 Q19 19 19 12 V10 H22 V13 Q22 22 12 22 Q2 22 2 13 Z" fill="#f26522"/><line x1="9" y1="16" x2="19" y2="5" stroke="#3d6b21" stroke-width="3" stroke-linecap="round"/><circle cx="21" cy="2.5" r="1.8" fill="#3d6b21"/></svg>
<svg style="left:925px;top:1047px" width="19" height="26"><defs><linearGradient id="pd" x1="0" y1="0" x2="1" y2="1"><stop offset="0" stop-color="#ffb900"/><stop offset=".35" stop-color="#e9468f"/><stop offset=".7" stop-color="#8661c5"/><stop offset="1" stop-color="#2fa0f0"/></linearGradient></defs><path d="M9.5 0.5 Q18.5 11 18.5 17 Q18.5 25.5 9.5 25.5 Q0.5 25.5 0.5 17 Q0.5 11 9.5 0.5 Z" fill="url(#pd)"/></svg>
<div style="position:absolute;left:914px;top:1078px;width:40px;height:2px;background:#76b9ed"></div>
<svg style="left:1488px;top:1048px" width="30" height="22"><circle cx="20" cy="7" r="6" fill="#f4a21b"/><path d="M3 20 Q0 20 0 16.5 Q0 13 4 13 Q5 7.5 11 7.5 Q16 7.5 18 11.5 Q24 11 24 16 Q24 20 20 20 Z" fill="#dfe9f7"/><path d="M3 20 Q0 20 0 17 H24 Q24 20 20 20 Z" fill="#b6c8e4"/></svg>
<div class="t" style="left:1522.00px;top:1051px;font-size:14px;font-weight:400;color:#fff;letter-spacing:-0.089px;-webkit-text-stroke:0;">36°C</div>
<div class="t" style="left:1562.00px;top:1051px;font-size:14px;font-weight:400;color:#fff;letter-spacing:0.018px;-webkit-text-stroke:0;">Mostly cloudy</div>
<svg style="left:1669px;top:1054px" width="14" height="9"><polyline points="1,8 7,2 13,8" fill="none" stroke="#fff" stroke-width="1.3"/></svg>
<svg style="left:1692px;top:1053px" width="18" height="12"><path d="M3 11 Q0 11 0 8 Q0 5.5 3 5.5 Q4 1 9 1 Q13 1 14 4.5 Q18 4.5 18 8 Q18 11 15 11 Z" fill="#fff" opacity=".85"/></svg>
<svg style="left:1716px;top:1051px" width="20" height="18"><g fill="none" stroke="#fff" stroke-width="1.1"><rect x="4.5" y="2.5" width="14" height="10"/><path d="M11.5 12.5 V16 M7 16.5 H16"/><rect x="0.5" y="0.5" width="4" height="4"/></g></svg>
<svg style="left:1740px;top:1051px" width="20" height="17"><g fill="none" stroke="#fff" stroke-width="1.1"><path d="M1 6 H4 L9 1.5 V15.5 L4 11 H1 Z"/><path d="M12 5.5 Q14 8.5 12 11.5 M14.5 3.5 Q18 8.5 14.5 13.5"/></g></svg>
<div class="t" style="left:1766.00px;top:1051px;font-size:13px;font-weight:400;color:#fff;letter-spacing:0.000px;transform:scaleX(0.8519);transform-origin:0 0;-webkit-text-stroke:0;">ENG</div>
<div class="t" style="left:1817.00px;top:1041px;font-size:13px;font-weight:400;color:#fff;letter-spacing:0.000px;transform:scaleX(0.8296);transform-origin:0 0;-webkit-text-stroke:0;">19:23</div>
<div class="t" style="left:1803.00px;top:1059px;font-size:13px;font-weight:400;color:#fff;letter-spacing:0.000px;transform:scaleX(0.8868);transform-origin:0 0;-webkit-text-stroke:0;">28-04-2023</div>
<svg style="left:1876px;top:1050px" width="28" height="26"><path d="M1 1 H18 V13 H9 L5 17 V13 H1 Z" fill="#fff"/><g stroke="#1b2846" stroke-width="1"><path d="M4 4.5 H15 M4 7.5 H15 M4 10.5 H12"/></g><circle cx="18.5" cy="17" r="7.5" fill="#2b2b2b" stroke="#6a6a6a" stroke-width="1"/><text x="18.5" y="21" font-family="Liberation Sans" font-size="11" text-anchor="middle" fill="#fff">10</text></svg>
<div style="position:absolute;left:1915px;top:1040px;width:1px;height:40px;background:#4f5d78"></div>
<svg style="left:0;top:0" width="210" height="110"><path d="M14.5 80 V90.3 A12.9 12.9 0 0 0 40.3 90.3 V80" fill="none" stroke="#e8601e" stroke-width="5"/><path d="M12 80 H28.5 L25.6 85 H12 Z" fill="#e8601e"/><path d="M39.6 80 H42.8 V90.3 H37.8 V84 Z" fill="#e8601e"/><line x1="27.6" y1="92.6" x2="36.6" y2="74.4" stroke="#fff" stroke-width="7" stroke-linecap="round"/><line x1="27.6" y1="92.6" x2="36.6" y2="74.4" stroke="#3f5f1f" stroke-width="4.8" stroke-linecap="round"/><circle cx="40.4" cy="66.6" r="2.7" fill="#3f5f1f"/><circle cx="54.7" cy="82.5" r="5.6" fill="none" stroke="#e8601e" stroke-width="3.9"/><rect x="58.8" y="68" width="4" height="22" fill="#e8601e"/><circle cx="73.8" cy="82.5" r="5.6" fill="none" stroke="#e8601e" stroke-width="3.9"/><rect x="77.8" y="75" width="4" height="15" fill="#e8601e"/><polygon points="85.2,75 89.5,75 93.45,84.3 97.4,75 101.7,75 95.4,90 91.5,90" fill="#e8601e"/><circle cx="109.6" cy="82.5" r="5.6" fill="none" stroke="#e8601e" stroke-width="3.9"/><rect x="113.1" y="75" width="4" height="15" fill="#e8601e"/><rect x="121.7" y="75" width="4" height="15" fill="#3f5f1f"/><circle cx="123.7" cy="70.5" r="2.4" fill="#3f5f1f"/><rect x="129.6" y="75" width="4" height="15" fill="#3f5f1f"/><path d="M131.6 90 V82.5 A5.5 5.5 0 0 1 142.6 82.5 V90" fill="none" stroke="#3f5f1f" stroke-width="4"/><circle cx="153.75" cy="82.5" r="5.6" fill="none" stroke="#3f5f1f" stroke-width="3.9"/><rect x="159.3" y="68" width="4" height="22" fill="#3f5f1f"/><rect x="166.3" y="75" width="4" height="15" fill="#3f5f1f"/><circle cx="168.3" cy="70.5" r="2.4" fill="#3f5f1f"/><circle cx="180.8" cy="82.5" r="5.6" fill="none" stroke="#3f5f1f" stroke-width="3.9"/><rect x="186" y="75" width="4" height="15" fill="#3f5f1f"/><circle cx="194.8" cy="69.9" r="3.4" fill="none" stroke="#444" stroke-width="0.8"/><text x="194.8" y="72" font-family="Liberation Sans" font-size="5" text-anchor="middle" fill="#444">R</text></svg>
<div class="t" style="left:50.00px;top:90px;font-size:11px;font-weight:700;color:#e8601e;letter-spacing:0.525px;-webkit-text-stroke:0;transform:scaleX(1.12);transform-origin:0 0;">GENERIC PHARMACY</div>
<svg style="left:220px;top:163px" width="18" height="18" viewBox="10 64 34 44"><g transform="translate(0,0)"><path d="M14.5 80 V90.3 A12.9 12.9 0 0 0 40.3 90.3 V80" fill="none" stroke="#e8601e" stroke-width="6"/><path d="M12 80 H28.5 L25.6 86 H12 Z" fill="#e8601e"/><line x1="27.3" y1="93.2" x2="37.6" y2="72.4" stroke="#3f5f1f" stroke-width="6" stroke-linecap="round"/><circle cx="40.4" cy="66.6" r="3" fill="#3f5f1f"/></g></svg>
<svg style="left:0;top:0" width="1400" height="100"><g fill="none" stroke="#f4866a" stroke-width="2.2"><path d="M251 63 V60.5 Q251 59.5 252 59.5 H268.5 Q270 59.5 270 61 V75"/><path d="M247.5 88.5 V64.5 Q247.5 63.5 248.5 63.5 H264.5 Q266 63.5 266 65 V73"/><path d="M247.5 88.5 V89.5 H261"/></g><g stroke="#f4866a" stroke-width="1.6"><path d="M252 69.9 H259 M252 74.8 H261 M252 79.7 H258.5 M252 84.6 H258"/></g><circle cx="267.6" cy="84.2" r="6.4" fill="#f4866a"/><path d="M262.8 84.2 Q267.6 79.6 272.4 84.2 Q267.6 88.8 262.8 84.2 Z" fill="#fff"/><circle cx="267.6" cy="84.2" r="1.6" fill="#f4866a"/><path d="M356 66 V61.5 Q356 60 354.5 60 H336.5 Q335 60 335 61.5 V88 Q335 89.5 336.5 89.5 H354.5 Q356 89.5 356 88 V77" fill="none" stroke="#f4866a" stroke-width="2.4"/><rect x="339.5" y="64" width="12" height="4.5" fill="none" stroke="#f4866a" stroke-width="2"/><g stroke="#f4866a" stroke-width="1.8"><path d="M339 74.5 H346 M339 79 H345 M339 84 H352"/></g><path d="M364 62.5 L366.2 64.7 L350.5 80.4 L347.2 81.6 L348.3 78.3 Z" fill="#f4866a"/><g fill="none" stroke="#f4866a" stroke-width="1.3"><path d="M452.7 71.9 A9.2 9.2 0 1 0 446.7 77.1"/><path d="M444.3 61.8 V68.1 L441.6 70.8"/><path d="M453.75 69 L466.8 89.8 H440.7 Z"/></g><rect x="453" y="77.5" width="1.6" height="6" fill="#f4866a"/><rect x="453" y="85.3" width="1.6" height="1.5" fill="#f4866a"/><g fill="none" stroke="#f4866a" stroke-width="1.1"><path d="M552 64.6 A11 11 0 1 0 551.5 84.6 M539 82.5 Q538 85.5 536 86.5 H549"/><polygon points="564.10,67.40 563.97,68.73 562.20,69.43 561.71,70.35 562.11,72.21 561.08,73.05 559.33,72.30 558.33,72.60 557.30,74.20 555.97,74.07 555.27,72.30 554.35,71.81 552.49,72.21 551.65,71.18 552.40,69.43 552.10,68.43 550.50,67.40 550.63,66.07 552.40,65.37 552.89,64.45 552.49,62.59 553.52,61.75 555.27,62.50 556.27,62.20 557.30,60.60 558.63,60.73 559.33,62.50 560.25,62.99 562.11,62.59 562.95,63.62 562.20,65.37 562.50,66.37"/><circle cx="557.3" cy="67.4" r="2"/><polygon points="561.30,84.00 561.19,84.96 560.02,85.46 559.62,86.09 559.68,87.36 558.87,87.87 557.75,87.27 557.00,87.35 556.04,88.19 555.13,87.87 554.91,86.62 554.38,86.09 553.13,85.87 552.81,84.96 553.65,84.00 553.73,83.25 553.13,82.13 553.64,81.32 554.91,81.38 555.54,80.98 556.04,79.81 557.00,79.70 557.75,80.73 558.46,80.98 559.68,80.64 560.36,81.32 560.02,82.54 560.27,83.25"/><circle cx="557" cy="84" r="1.3"/><path d="M557 74.5 V79.5"/><path d="M547 69.5 V78"/></g><rect x="546.5" y="80" width="1.1" height="1.3" fill="#f4866a"/><g fill="none" stroke="#f4866a" stroke-width="1.4"><path d="M631 72 L646.2 61.8 L661 72"/><path d="M633.2 70.5 V89.5 M658.8 70.5 V89.5"/></g><g fill="#f4866a"><rect x="638.5" y="72.8" width="4" height="4"/><rect x="638.5" y="78.4" width="4" height="4"/><rect x="644.7" y="78.4" width="4" height="4"/><rect x="638.5" y="84.2" width="4" height="4"/><rect x="644.7" y="84.2" width="4" height="4"/><rect x="651.5" y="84.2" width="4" height="4"/></g><g fill="#f4866a"><circle cx="753.9" cy="62.5" r="2.3"/><path d="M748 77 V68.5 Q748 65.5 751 65.5 H757 Q759 65.5 759 68 V77 Z"/><rect x="760" y="68" width="12.3" height="9"/></g><rect x="767.5" y="74.5" width="2.5" height="1.2" fill="#fff"/><rect x="746" y="79" width="29" height="5" rx="2.5" fill="#f4866a"/><g fill="#fff"><rect x="749" y="80.5" width="2" height="2"/><rect x="753.5" y="80.5" width="2" height="2"/><rect x="758" y="80.5" width="2" height="2"/><rect x="762.5" y="80.5" width="2" height="2"/><rect x="767" y="80.5" width="2" height="2"/></g><path d="M749 87.8 H768" stroke="#f4866a" stroke-width="1"/><path d="M765.5 85.8 L769.5 87.8 L765.5 89.8" fill="none" stroke="#f4866a" stroke-width="1"/><path d="M874.2 73.5 L888.7 59.3 L903.2 73.5 L901.2 75.3 L888.7 63.3 L876.2 75.3 Z" fill="#7dcfd9" stroke="#000" stroke-width="1"/><path d="M878.2 72 L888.7 62.5 L899.2 72 V90.5 H878.2 Z" fill="#7dcfd9" stroke="#000" stroke-width="1.1"/><rect x="883.7" y="73.5" width="10" height="17" fill="#fff" stroke="#000" stroke-width="1"/><path d="M883.7 75.5 H893.7" stroke="#000" stroke-width="0.9"/><path d="M883.7 77.6 H893.7" stroke="#000" stroke-width="0.9"/><path d="M883.7 79.7 H893.7" stroke="#000" stroke-width="0.9"/><path d="M883.7 81.8 H893.7" stroke="#000" stroke-width="0.9"/><path d="M883.7 83.9 H893.7" stroke="#000" stroke-width="0.9"/><path d="M883.7 86.0 H893.7" stroke="#000" stroke-width="0.9"/><path d="M883.7 88.1 H893.7" stroke="#000" stroke-width="0.9"/><path d="M1177.9 73.5 L1192.4 59.3 L1206.9 73.5 L1204.9 75.3 L1192.4 63.3 L1179.9 75.3 Z" fill="#7dcfd9" stroke="#000" stroke-width="1"/><path d="M1181.9 72 L1192.4 62.5 L1202.9 72 V90.5 H1181.9 Z" fill="#7dcfd9" stroke="#000" stroke-width="1.1"/><rect x="1187.4" y="73.5" width="10" height="17" fill="#fff" stroke="#000" stroke-width="1"/><path d="M1187.4 75.5 H1197.4" stroke="#000" stroke-width="0.9"/><path d="M1187.4 77.6 H1197.4" stroke="#000" stroke-width="0.9"/><path d="M1187.4 79.7 H1197.4" stroke="#000" stroke-width="0.9"/><path d="M1187.4 81.8 H1197.4" stroke="#000" stroke-width="0.9"/><path d="M1187.4 83.9 H1197.4" stroke="#000" stroke-width="0.9"/><path d="M1187.4 86.0 H1197.4" stroke="#000" stroke-width="0.9"/><path d="M1187.4 88.1 H1197.4" stroke="#000" stroke-width="0.9"/><path d="M1251.0 73.5 L1265.5 59.3 L1280.0 73.5 L1278.0 75.3 L1265.5 63.3 L1253.0 75.3 Z" fill="#7dcfd9" stroke="#000" stroke-width="1"/><path d="M1255.0 72 L1265.5 62.5 L1276.0 72 V90.5 H1255.0 Z" fill="#7dcfd9" stroke="#000" stroke-width="1.1"/><rect x="1260.5" y="73.5" width="10" height="17" fill="#fff" stroke="#000" stroke-width="1"/><path d="M1260.5 75.5 H1270.5" stroke="#000" stroke-width="0.9"/><path d="M1260.5 77.6 H1270.5" stroke="#000" stroke-width="0.9"/><path d="M1260.5 79.7 H1270.5" stroke="#000" stroke-width="0.9"/><path d="M1260.5 81.8 H1270.5" stroke="#000" stroke-width="0.9"/><path d="M1260.5 83.9 H1270.5" stroke="#000" stroke-width="0.9"/><path d="M1260.5 86.0 H1270.5" stroke="#000" stroke-width="0.9"/><path d="M1260.5 88.1 H1270.5" stroke="#000" stroke-width="0.9"/><g fill="#f4866a"><path d="M1005.5 59.5 L1019.5 64.5 L1005.5 69.3 L991.5 64.5 Z"/><path d="M991.2 66.8 L1004.3 71.5 V88.3 L991.2 83.2 Z"/><path d="M1006.7 71.5 L1019.8 66.8 V77 Q1012 77.5 1009 84 L1006.7 85 Z"/></g><polygon points="1021.70,83.30 1021.60,84.39 1020.02,84.98 1019.66,85.76 1020.23,87.35 1019.45,88.13 1017.86,87.56 1017.08,87.92 1016.49,89.50 1015.40,89.60 1014.55,88.14 1013.72,87.92 1012.25,88.76 1011.35,88.13 1011.64,86.46 1011.14,85.76 1009.48,85.45 1009.20,84.39 1010.49,83.30 1010.56,82.45 1009.48,81.15 1009.94,80.15 1011.64,80.14 1012.24,79.54 1012.25,77.84 1013.25,77.38 1014.55,78.46 1015.40,78.39 1016.49,77.10 1017.55,77.38 1017.86,79.04 1018.56,79.54 1020.23,79.25 1020.86,80.15 1020.02,81.62 1020.24,82.45" fill="#fff" stroke="#f4866a" stroke-width="1.6"/><circle cx="1015.4" cy="83.3" r="2.2" fill="none" stroke="#f4866a" stroke-width="1.6"/><g fill="none" stroke="#f4866a" stroke-width="1.5"><path d="M1098.4 64.2 L1102.5 67.2 V82 H1126.7"/><path d="M1108.5 68 H1105.3 V79 H1124.3 V68 H1121"/><circle cx="1114.6" cy="67.8" r="6.3"/><path d="M1111.3 67.8 L1113.8 70.2 L1118 65.5"/></g><circle cx="1107" cy="84.6" r="1.8" fill="#f4866a"/><circle cx="1120.6" cy="84.6" r="1.8" fill="#f4866a"/><path d="M1324.5 60.5 H1342 L1348 66.5 V89.5 H1324.5 Z" fill="#fff" stroke="#ec6420" stroke-width="2.2" stroke-linejoin="round"/><path d="M1341.5 60.5 V66.8 H1348" fill="none" stroke="#ec6420" stroke-width="1.4"/><g stroke="#ec6420" stroke-width="1.4"><path d="M1328.5 64.8 H1340 M1328.5 70 H1345 M1328.5 75.5 H1345 M1328.5 81 H1345 M1328.5 86.2 H1345"/></g></svg>
<svg style="left:0;top:900px" width="210" height="120" viewBox="0 900 210 120"><path d="M180.90 997.50 A76.4 76.4 0 0 0 28.10 997.50 L34.20 997.50 A70.3 70.3 0 0 1 174.80 997.50 Z" fill="#b3b3b3"/><path d="M154.21 947.79 A70.3 70.3 0 0 0 34.20 997.50 L63.80 997.50 A40.7 40.7 0 0 1 133.28 968.72 Z" fill="#fff"/><path d="M174.80 997.50 A70.3 70.3 0 0 0 154.21 947.79 L133.28 968.72 A40.7 40.7 0 0 1 145.20 997.50 Z" fill="#c1232c"/><path d="M63.8 997.5 A40.7 40.7 0 0 1 145.2 997.5" fill="none" stroke="#9a8a8a" stroke-width="0.6"/><line x1="104.50" y1="956.80" x2="104.50" y2="927.20" stroke="#777" stroke-width="0.7"/><line x1="75.72" y1="968.72" x2="54.79" y2="947.79" stroke="#777" stroke-width="0.7"/><path d="M130.50 997.50 A26 26 0 0 0 78.50 997.50 L104.50 997.50 A0 0 0 0 1 104.50 997.50 Z" fill="#e6e6e6"/><path d="M126.40 997.50 A21.9 21.9 0 0 0 82.60 997.50 L104.50 997.50 A0 0 0 0 1 104.50 997.50 Z" fill="#b5b5b5"/><path d="M104.5 995.9 L172.5 997.1 L172.5 997.9 L104.5 999.1 Z" fill="#3d3d3d"/><circle cx="104.5" cy="997.5" r="3" fill="#444"/><text transform="translate(155,976.5) rotate(64)" font-family="Liberation Sans" font-size="8.1" font-weight="700" y="3" fill="#fff" text-anchor="middle">High Risk</text></svg>
<div class="t" style="left:42.00px;top:999px;font-size:12px;font-weight:700;color:#7a2f2f;letter-spacing:0.000px;-webkit-text-stroke:0;transform:scaleX(0.8855);transform-origin:0 0;">Database Backup Status</div>
</body></html>
